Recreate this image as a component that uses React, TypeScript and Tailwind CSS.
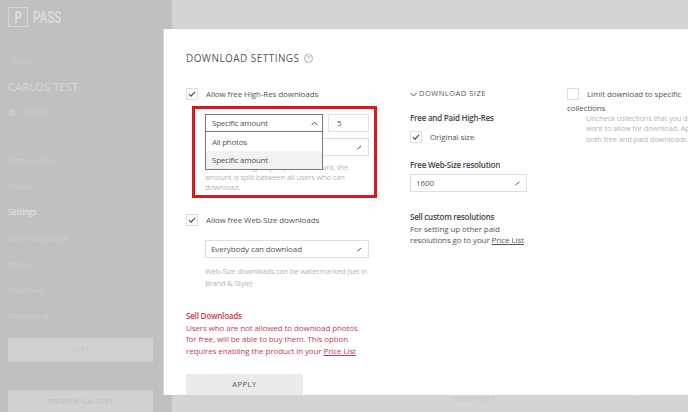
import type { ReactNode } from 'react';

const navItems = ['Name & Cover', 'Photos', 'Settings', 'Sales Campaigns', 'Share', 'Workflow', 'Dashboard'];

function Check({ checked = true }: { checked?: boolean }) {
  return (
    <span className="flex size-3 shrink-0 items-center justify-center border border-[#dedede] bg-white">
      {checked && (
        <svg viewBox="0 0 8 8" className="size-[8px]" fill="none" stroke="#444" strokeWidth="1.1">
          <path d="M1 4.2 3 6.2 7 1.8" />
        </svg>
      )}
    </span>
  );
}

function Select({ children, className }: { children: ReactNode; className: string }) {
  return (
    <div className={'flex h-[18px] items-center justify-between border border-[#dedede] bg-white pr-[6px] pl-[5px] ' + className}>
      <span>{children}</span>
      <svg viewBox="0 0 5 5" className="mt-[1px] size-[5px]" fill="none" stroke="#555" strokeWidth="1">
        <path d="M.5 4 2 3M2 3 4.2.8" />
      </svg>
    </div>
  );
}

function Sidebar() {
  return (
    <aside className="flex h-full w-[172px] shrink-0 flex-col overflow-hidden bg-[#c0c0c0] pl-2 tracking-normal text-[#cdcdcd] [&>*]:shrink-0">
      <div className="mt-[7px] flex h-5 items-center gap-[5px] text-[#dcdcdc]">
        <span className="flex size-5 items-center justify-center border border-[#d6d6d6]">
          <svg viewBox="0 0 8 12" className="h-3 w-2" fill="none" stroke="#dcdcdc" strokeWidth="1.8">
            <path d="M2 12V1H4.5Q6.5 1 6.5 3.8T4.5 6.6H2" />
          </svg>
        </span>
        <span className="w-7 origin-left scale-x-[.68] font-['Roboto'] text-[17px] leading-5 font-medium">PASS</span>
      </div>
      <div className="-ml-[3px] mt-[30px] flex h-3 items-center gap-[6px] text-[6.5px]">
        <span>‹</span><span>BACK</span>
      </div>
      <div className="mt-[10px] h-4 text-[11px] leading-4 font-medium tracking-[.2px] text-[#d8d8d8]">CARLOS TEST</div>
      <div className="mt-[11px] flex h-3 items-center gap-[5px] text-[7px]">
        <svg viewBox="0 0 10 7" className="h-[7px] w-[10px]" fill="none" stroke="#d2d2d2">
          <path d="M.5 3.5Q5-2 9.5 3.5 5 9 .5 3.5Z" /><circle cx="5" cy="3.5" r="1.3" />
        </svg>
        <span>ONLINE</span>
      </div>
      <nav className="mt-[23px] flex flex-col text-[8px] tracking-[-.1px]">
        {navItems.map((item) => (
          <div key={item} className={item === 'Settings' ? 'h-[26px] leading-[38px] font-semibold tracking-[-.3px] text-[#dedede]' : 'h-[26px] leading-[38px]'}>{item}</div>
        ))}
      </nav>
      <div className="mt-[15px] h-6 w-[145px] bg-[#d1d1d1] text-center text-[7px] leading-6 tracking-[.3px] text-[#c3c3c3]">NEXT</div>
      <div className="mt-[28px] h-6 w-[145px] bg-[#d1d1d1] text-center text-[7px] leading-6 tracking-[.5px] text-[#bdbdbd]">PREVIEW GALLERY</div>
    </aside>
  );
}

function AmountPicker() {
  return (
    <section className="mt-[6px] ml-[6px] h-[92px] w-[185px] border-[3px] border-[#d71920] pt-[5px] pl-[10px]">
      <div className="relative flex h-[18px] gap-[5px] tracking-[-.24px]">
        <div className="flex w-[118px] items-center justify-between border border-[#777] pr-[4px] pl-[6px]">
          <span>Specific amount</span>
          <svg viewBox="0 0 7 5" className="h-[5px] w-[7px]" fill="none" stroke="#555"><path d="M.5 4.2 3.5 1.2 6.5 4.2" /></svg>
        </div>
        <div className="flex w-[41px] items-center border border-[#e2e2e2] pl-[8px]">5</div>
        <div className="absolute top-[17px] left-0 z-10 h-[39px] w-[118px] border border-[#777] bg-white">
          <div className="h-[19px] pl-[6px] leading-[20px]">All photos</div>
          <div className="h-[18px] bg-[#f2f2f2] pl-[6px] leading-[18px]">Specific amount</div>
        </div>
      </div>
      <Select className="mt-[6px] w-[164px]">{' '}</Select>
      <p className="mt-[6px] text-[7.5px] leading-[10px] tracking-[-.15px] whitespace-nowrap text-[#b5b5b5]">
        When choosing only a specific amount, the<br />amount is split between all users who can<br />download.
      </p>
    </section>
  );
}

export default function App() {
  return (
    <div className="relative flex h-[412px] w-[688px] overflow-hidden bg-[#d3d3d3] font-['Open_Sans',sans-serif] text-[8px] tracking-[-.1px] text-[#555]">
      <Sidebar />
      <main className="flex flex-1 items-end justify-between pr-[50px] pb-[8px] pl-[282px] text-[7px] leading-[10px] text-[#c6c6c6]">
        <span>Watermark 1</span><span>•</span>
      </main>
      <div className="absolute top-[29px] left-[163px] flex h-[366px] w-[525px] flex-col overflow-hidden border-l border-[#d8d8d8] bg-white pl-[22px]">
        <header className="mt-[20px] flex h-[18px] items-center gap-[5px]">
          <h1 className="w-[113px] origin-left scale-x-[.9] text-[11px] leading-[18px] tracking-[.55px] whitespace-nowrap text-[#555]">DOWNLOAD SETTINGS</h1>
          <span className="flex size-[9px] items-center justify-center rounded-full border border-[#aaa] text-[6px] leading-none text-[#888]">?</span>
        </header>
        <div className="mt-[21px] flex">
          <div className="w-[224px] shrink-0">
            <div className="flex h-3 items-center gap-2"><Check /><span className="whitespace-nowrap">Allow free High-Res downloads</span></div>
            <AmountPicker />
            <div className="mt-[16px] flex h-3 items-center gap-2"><Check /><span className="whitespace-nowrap">Allow free Web-Size downloads</span></div>
            <Select className="mt-[14px] ml-[19px] w-[164px]">Everybody can download</Select>
            <p className="mt-[7px] ml-[19px] text-[7.5px] leading-[12px] tracking-[-.15px] whitespace-nowrap text-[#b5b5b5]">Web-Size downloads can be watermarked (set in<br />Brand &amp; Style)</p>
            <div className="mt-[21px] leading-[11.5px] whitespace-nowrap text-[#c43b55]">
              <h2 className="font-semibold tracking-[-.2px]">Sell Downloads</h2>
              <p>Users who are not allowed to download photos<br />for free, will be able to buy them. This option<br />requires enabling the product in your <u>Price List</u></p>
            </div>
            <button className="mt-[18px] h-6 w-[117px] bg-[#ebebeb] pb-[2px] text-center text-[7.5px] tracking-[.5px]">APPLY</button>
          </div>
          <div className="w-[157px] shrink-0">
            <div className="flex h-3 items-center gap-[2px] text-[7.5px] tracking-[.5px] whitespace-nowrap">
              <svg viewBox="0 0 7 5" className="h-[5px] w-[7px]" fill="none" stroke="#555"><path d="M.5 1 3.5 4 6.5 1" /></svg>
              DOWNLOAD SIZE
            </div>
            <h2 className="mt-[12px] h-3 leading-3 font-semibold tracking-[-.22px] text-[#444]">Free and Paid High-Res</h2>
            <div className="mt-[7px] flex h-3 items-center gap-2"><Check />Original size</div>
            <h2 className="mt-[16px] h-3 leading-3 font-semibold tracking-[-.22px] text-[#444]">Free Web-Size resolution</h2>
            <Select className="mt-[3px] w-[117px]">1600</Select>
            <div className="mt-[19px] leading-[11.5px] whitespace-nowrap">
              <h2 className="font-semibold tracking-[-.24px] text-[#444]">Sell custom resolutions</h2>
              <p>For setting up other paid<br />resolutions go to your <u>Price List</u></p>
            </div>
          </div>
          <div className="w-[150px] shrink-0 whitespace-nowrap">
            <div className="flex h-3 items-center gap-2"><Check checked={false} />Limit download to specific</div>
            <div className="mt-px leading-[13px]">collections</div>
            <p className="-mt-px ml-[19px] text-[7.5px] leading-[10.4px] tracking-[-.16px] text-[#b5b5b5]">Uncheck collections that you don't<br />want to allow for download. Applies to<br />both free and paid downloads.</p>
          </div>
        </div>
      </div>
    </div>
  );
}
